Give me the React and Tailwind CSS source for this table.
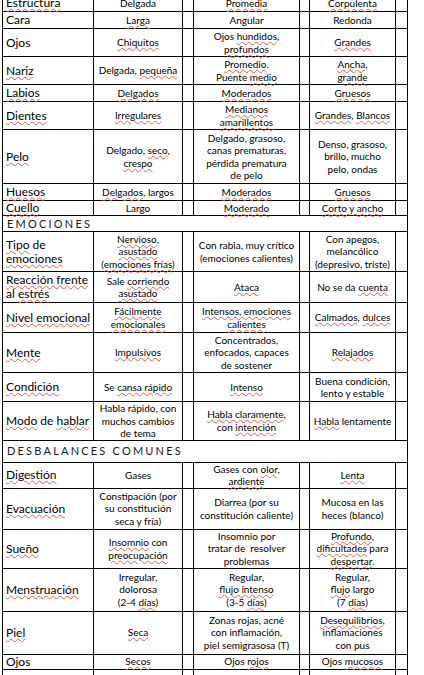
import React from 'react';

// palabra marcada por el corrector
const S = ({ children }) => (
    <span className="underline decoration-wavy decoration-[#e2574d] decoration-[0.8px] underline-offset-[1px]">{children}</span>
);

const rows = [
    { h: 17, label: <S>Estructura</S>, cells: ['Delgada', <S>Promedia</S>, <S>Corpulenta</S>] },
    { h: 17, label: 'Cara', cells: [<S>Larga</S>, 'Angular', 'Redonda'] },
    { h: 28, label: 'Ojos', cells: [<S>Chiquitos</S>, <>Ojos <S>hundidos</S>,<br /><S>profundos</S></>, <S>Grandes</S>] },
    { h: 28, label: <S>Nariz</S>, cells: [<>Delgada, <S>pequeña</S></>, <><S>Promedio</S>.<br />Puente <S>medio</S></>, <><S>Ancha</S>,<br /><S>grande</S></>] },
    { h: 17, label: <S>Labios</S>, cells: [<S>Delgados</S>, <S>Moderados</S>, <S>Gruesos</S>] },
    { h: 28, label: <S>Dientes</S>, cells: [<S>Irregulares</S>, <><S>Medianos</S><br /><S>amarillentos</S></>, <><S>Grandes</S>, <S>Blancos</S></>] },
    { h: 54, label: <S>Pelo</S>, cells: [<>Delgado, <S>seco</S>,<br /><S>crespo</S></>, <>Delgado, grasoso,<br />canas prematuras,<br />pérdida prematura<br />de pelo</>, <>Denso, grasoso,<br />brillo, mucho<br />pelo, ondas</>] },
    { h: 17, label: <S>Huesos</S>, cells: [<><S>Delgados</S>, largos</>, <S>Moderados</S>, <S>Gruesos</S>] },
    { h: 15, label: <S>Cuello</S>, cells: ['Largo', <S>Moderado</S>, <S>Corto y ancho</S>] },
    { h: 16, header: 'EMOCIONES' },
    { h: 40, label: <><S>Tipo</S> de<br /><S>emociones</S></>, cells: [<><S>Nervioso</S>,<br /><S>asustado</S><br /><S>(emociones frías)</S></>, <>Con rabia, muy crítico<br />(emociones calientes)</>, <>Con apegos,<br />melancólico<br />(depresivo, triste)</>] },
    { h: 31, label: <><S>Reacción frente</S><br />al <S>estrés</S></>, cells: [<>Sale <S>corriendo</S><br /><S>asustado</S></>, <S>Ataca</S>, <>No se da <S>cuenta</S></>] },
    { h: 30, label: <S>Nivel emocional</S>, cells: [<><S>Fácilmente</S><br /><S>emocionales</S></>, <><S>Intensos, emociones</S><br /><S>calientes</S></>, <><S>Calmados</S>, <S>dulces</S></>] },
    { h: 40, label: <S>Mente</S>, cells: [<S>Impulsivos</S>, <>Concentrados,<br />enfocados, capaces<br />de sostener</>, <S>Relajados</S>] },
    { h: 29, label: <S>Condición</S>, cells: [<>Se <S>cansa rápido</S></>, <S>Intenso</S>, <>Buena condición,<br />lento y estable</>] },
    { h: 38, label: <><S>Modo</S> de <S>hablar</S></>, cells: [<>Habla rápido, con<br />muchos cambios<br />de tema</>, <><S>Habla claramente</S>,<br />con <S>intención</S></>, <><S>Habla</S> lentamente</>] },
    { h: 22, header: 'DESBALANCES COMUNES' },
    { h: 26, label: <S>Digestión</S>, cells: ['Gases', <>Gases con <S>olor</S>,<br /><S>ardiente</S></>, <S>Lenta</S>] },
    { h: 41, label: <S>Evacuación</S>, cells: [<>Constipación (por<br />su constitución<br />seca y fría)</>, <>Diarrea (por su<br />constitución caliente)</>, <>Mucosa en las<br />heces (blanco)</>] },
    { h: 39, label: <S>Sueño</S>, cells: [<><S>Insomnio</S> con<br /><S>preocupación</S></>, <>Insomnio por<br />tratar de&nbsp; resolver<br />problemas</>, <><S>Profundo</S>,<br /><S>dificultades</S> para<br /><S>despertar</S>.</>] },
    { h: 43, label: <S>Menstruación</S>, cells: [<>Irregular,<br />dolorosa<br />(2-4 <S>días</S>)</>, <>Regular,<br /><S>flujo intenso</S><br />(3-5 <S>días</S>)</>, <>Regular,<br /><S>flujo</S> largo<br />(7 <S>días</S>)</>] },
    { h: 43, label: <S>Piel</S>, cells: [<S>Seca</S>, <>Zonas rojas, acné<br />con inflamación,<br />piel semigrasosa (T)</>, <><S>Desequilibrios</S>,<br />inflamaciones<br />con pus</>] },
    { h: 14, label: 'Ojos', cells: [<S>Secos</S>, <>Ojos <S>rojos</S></>, <>Ojos <S>mucosos</S></>] },
    { h: 23, label: 'Peso', cells: ['Pierde peso', 'Estable', 'Gana peso'] },
];

const cell = 'border border-black p-0 text-center align-middle';

export default function App() {
    return (
        <div className="w-[424px] h-[675px] overflow-hidden bg-white text-black" style={{ fontFamily: 'Lato, "Open Sans", sans-serif' }}>
            <table className="table-fixed border-collapse ml-[2px] -mt-[6px] w-[405px]">
                <colgroup>
                    <col className="w-[91px]" />
                    <col className="w-[89px]" />
                    <col className="w-[11px]" />
                    <col className="w-[106px]" />
                    <col className="w-[10px]" />
                    <col className="w-[86px]" />
                    <col className="w-[12px]" />
                </colgroup>
                <tbody>
                    {rows.map((r, i) =>
                        r.header ? (
                            <tr key={i} style={{ height: r.h }}>
                                <td colSpan={7} className="border border-black p-0 pl-[4px] align-middle text-[11px] leading-[12px] tracking-[2.2px] text-[#1a1a1a]">
                                    {r.header}
                                </td>
                            </tr>
                        ) : (
                            <tr key={i} style={{ height: r.h }}>
                                <td className="border border-black p-0 pl-[3px] align-middle text-[12px] leading-[14px] text-black whitespace-nowrap">
                                    {r.label}
                                </td>
                                <td className={`${cell} text-[10px] leading-[12.5px]`}>{r.cells[0]}</td>
                                <td className={cell}></td>
                                <td className={`${cell} text-[10px] leading-[12.5px] whitespace-nowrap`}>{r.cells[1]}</td>
                                <td className={cell}></td>
                                <td className={`${cell} text-[10px] leading-[12.5px] whitespace-nowrap`}>{r.cells[2]}</td>
                                <td className={cell}></td>
                            </tr>
                        )
                    )}
                </tbody>
            </table>
        </div>
    );
}
